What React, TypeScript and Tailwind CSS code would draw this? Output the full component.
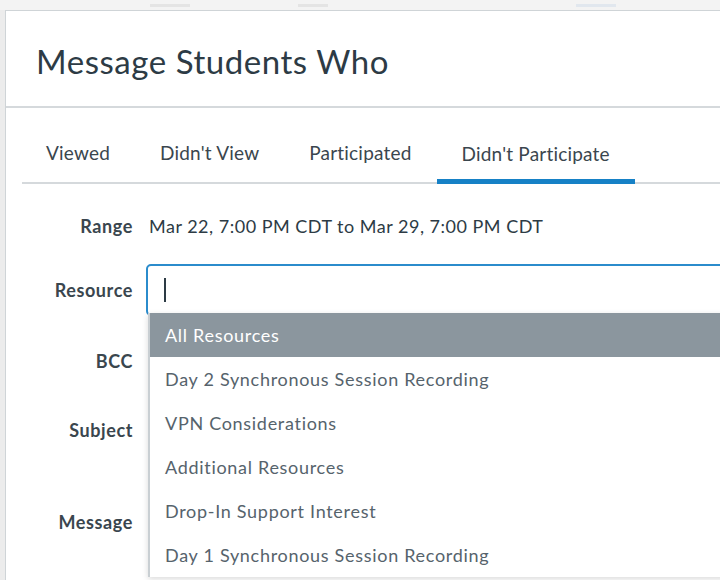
import React from 'react';

const tabs = ['Viewed', "Didn't View", 'Participated', "Didn't Participate"];

const resources = [
    'All Resources',
    'Day 2 Synchronous Session Recording',
    'VPN Considerations',
    'Additional Resources',
    'Drop-In Support Interest',
    'Day 1 Synchronous Session Recording',
];

function FieldRow({ label, height, children }: { label: string; height: string; children?: React.ReactNode }) {
    return (
        <div className={`flex items-center ${height}`}>
            <div className="w-[111px] shrink-0 text-right text-[18px] tracking-[0.6px] font-bold text-[#3a464e]">{label}</div>
            <div className="ml-[13px] flex-1 h-full flex items-center">{children}</div>
        </div>
    );
}

export default function App() {
    return (
        <div
            className="relative w-[720px] h-[580px] overflow-hidden bg-[#ececec]"
            style={{ fontFamily: 'Lato, "Noto Sans", sans-serif' }}
        >
            {/* faded page behind the dialog */}
            <div className="h-[10px] bg-[#f3f3f3] flex items-center gap-2 pl-[150px]">
                <span className="w-[40px] h-[3px] bg-[#e4e4e4]" />
                <span className="ml-[100px] w-[30px] h-[3px] bg-[#e4e4e4]" />
                <span className="ml-[240px] w-[40px] h-[3px] bg-[#e1e7ee]" />
            </div>

            <div className="ml-[5px] h-[570px] bg-white border-t border-l border-[#cfd4d7] flex flex-col">
                {/* header */}
                <div className="h-[97px] shrink-0 flex items-center pl-[30px] border-b-2 border-[#d5d9dc]">
                    <h1 className="text-[33px] text-[#2d3b45] tracking-[0.55px] mt-[6px]">Message Students Who</h1>
                </div>

                <div className="relative pl-[16px] flex-1">
                    {/* tabs */}
                    <div className="flex border-b-2 border-[#d5d9dc] h-[76px]">
                        {tabs.map((t, i) => (
                            <div
                                key={t}
                                className={`flex items-center pt-[16px] px-[25px] text-[19px] tracking-[0.2px] text-[#3a464e] ${
                                    i === 0 ? 'pl-[24px]' : ''
                                } ${i === 3 ? 'border-b-[5px] border-[#1681c6] mb-[-2px] pt-[21px]' : ''}`}
                            >
                                {t}
                            </div>
                        ))}
                    </div>

                    {/* form */}
                    <div className="flex flex-col">
                        <div className="mt-[22px]">
                            <FieldRow label="Range" height="h-[40px]">
                                <span className="ml-[3px] text-[18px] tracking-[0.5px] text-[#2d3b45]">
                                    Mar 22, 7:00 PM CDT to Mar 29, 7:00 PM CDT
                                </span>
                            </FieldRow>
                        </div>
                        <div className="mt-[18px]">
                            <FieldRow label="Resource" height="h-[52px]">
                                <div className="h-full w-[600px] rounded-[5px] border-2 border-[#2b8ccc] bg-white flex items-center pl-[16px]">
                                    <span className="w-[2px] h-[24px] bg-[#2d3b45]" />
                                </div>
                            </FieldRow>
                        </div>
                        <div className="mt-[25px]">
                            <FieldRow label="BCC" height="h-[40px]" />
                        </div>
                        <div className="mt-[27px]">
                            <FieldRow label="Subject" height="h-[44px]" />
                        </div>
                        <div className="mt-[50px]">
                            <FieldRow label="Message" height="h-[40px]" />
                        </div>
                    </div>

                    {/* open dropdown of the resource field */}
                    <ul className="absolute left-[142px] top-[205px] w-[600px] bg-white border-l-2 border-[#c9cfd3] shadow-[0_2px_6px_rgba(0,0,0,0.15)]">
                        {resources.map((r, i) => (
                            <li
                                key={r}
                                className={`h-[44px] flex items-center pl-[15px] text-[18px] tracking-[0.7px] ${
                                    i === 0 ? 'bg-[#8b969e] text-white' : 'text-[#56636c]'
                                }`}
                            >
                                {r}
                            </li>
                        ))}
                    </ul>
                </div>
            </div>
        </div>
    );
}
